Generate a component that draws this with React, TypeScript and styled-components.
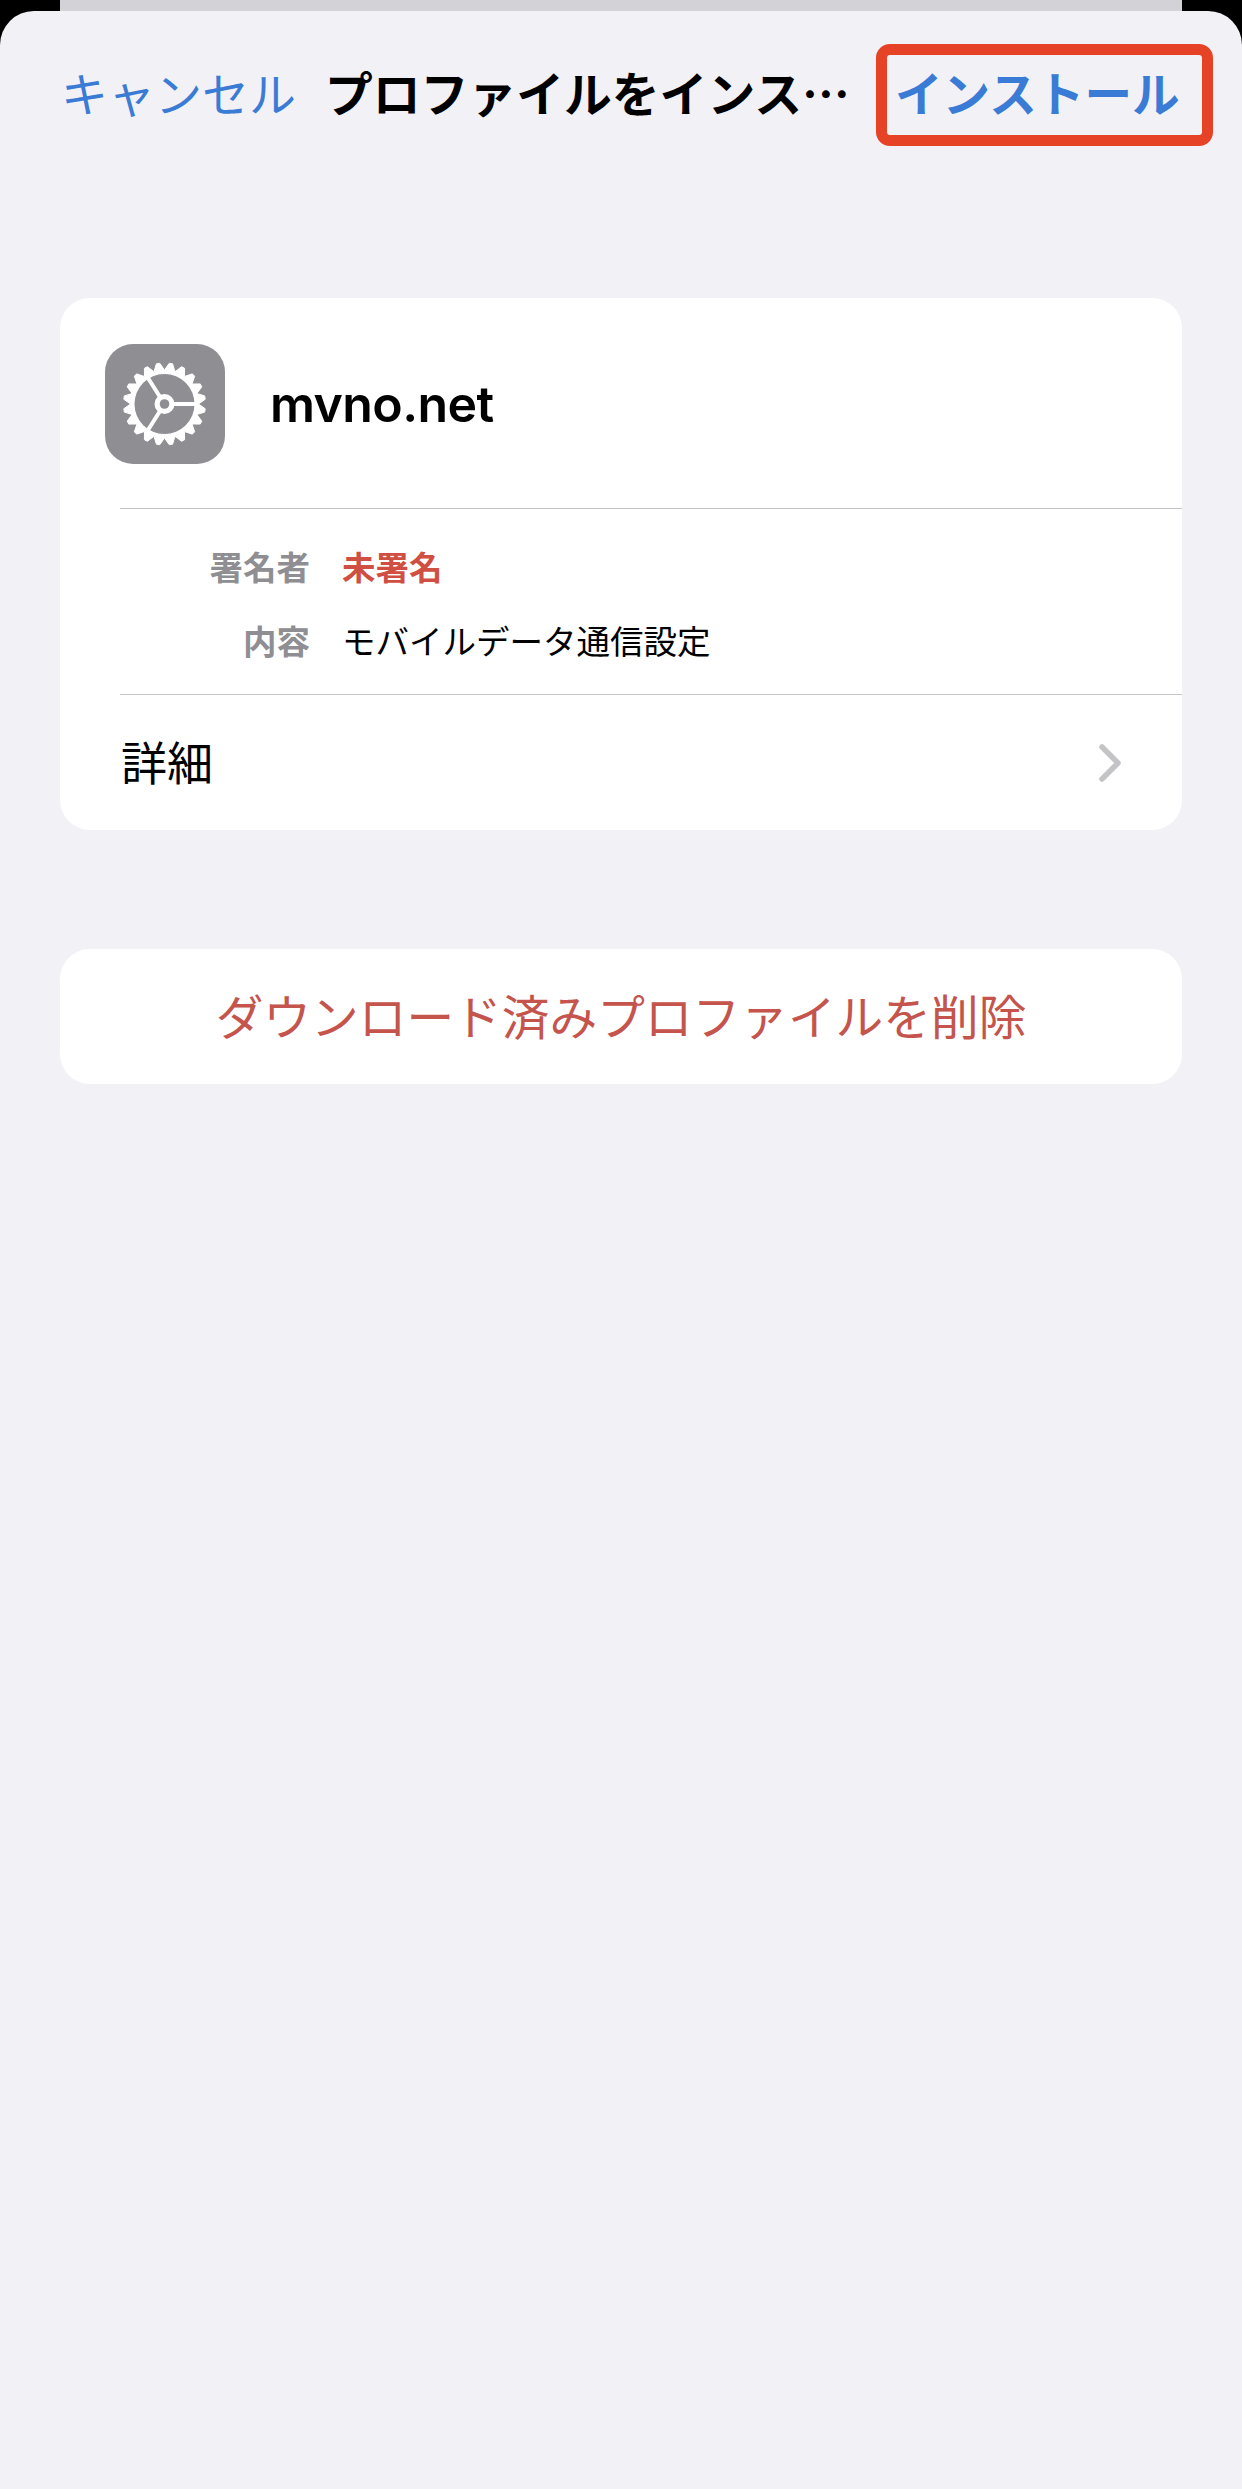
import React from "react";
import styled, { createGlobalStyle } from "styled-components";

const Global = createGlobalStyle`
  html, body { margin: 0; padding: 0; background: #000; }
  body { font-family: Inter, "Noto Sans CJK JP", sans-serif; }
`;

const CJK = `"Noto Sans CJK JP", "Noto Sans CJK SC", sans-serif`;

const Page = styled.div`
  width: 1242px;
  height: 2489px;
  overflow: hidden;
  background: #000;
  display: flex;
  flex-direction: column;
`;

const BackSheet = styled.div`
  height: 11px;
  margin: 0 60px;
  flex: none;
  background: #d2d2d7;
`;

const Sheet = styled.main`
  flex: 1;
  background: #f1f1f6;
  border-radius: 34px 34px 0 0;
  display: flex;
  flex-direction: column;
`;

const NavBar = styled.header`
  height: 136px;
  margin-top: 33px;
  padding: 0 29px 0 61px;
  display: flex;
  align-items: flex-start;
  font-family: ${CJK};
  font-size: 47px;
  line-height: 96px;
  white-space: nowrap;
`;

const NavAction = styled.span<{ $bold?: boolean }>`
  color: #3a7bd5;
  font-weight: ${(p) => (p.$bold ? 700 : 400)};
  font-size: ${(p) => (p.$bold ? "47.6px" : "47px")};
`;

const NavTitle = styled.h1`
  margin: 0 0 0 29px;
  flex: 1;
  font-size: 47.8px;
  line-height: 96px;
  font-weight: 700;
  color: #000;
`;

const Highlight = styled.div`
  width: 337px;
  height: 102px;
  box-sizing: border-box;
  border: 11px solid #e64326;
  border-radius: 14px;
  padding-left: 8px;
  line-height: 74px;
`;

const Card = styled.section<{ $gap: number }>`
  margin: ${(p) => p.$gap}px 60px 0;
  background: #fff;
  border-radius: 30px;
  overflow: hidden;
`;

const ProfileRow = styled.div`
  height: 210px;
  box-sizing: border-box;
  padding: 1px 0 0 45px;
  display: flex;
  align-items: center;
  gap: 45px;
`;

const IconTile = styled.div`
  width: 120px;
  height: 120px;
  flex: none;
  border-radius: 28px;
  background: #8e8e93;
  display: flex;
  align-items: center;
  justify-content: center;
`;

const ProfileName = styled.div`
  font-family: Inter, sans-serif;
  font-size: 50px;
  font-weight: 600;
  letter-spacing: -0.6px;
  color: #000;
`;

const Divider = styled.hr`
  margin: 0 0 0 60px;
  border: 0;
  height: 1px;
  background: #c6c6c9;
`;

const InfoBlock = styled.div`
  padding: 20px 0 17px;
  display: grid;
  grid-template-columns: 250px 1fr;
  column-gap: 33px;
  font-family: ${CJK};
  font-size: 33.5px;
  line-height: 74px;
`;

const InfoLabel = styled.div`
  text-align: right;
  color: #8e8e93;
  font-weight: 700;
`;

const InfoValue = styled.div<{ $alert?: boolean }>`
  color: ${(p) => (p.$alert ? "#cf4f43" : "#000")};
  font-weight: ${(p) => (p.$alert ? 700 : 400)};
  margin-left: -1px;
`;

const DetailRow = styled.div`
  height: 135px;
  padding: 0 60px 0 61px;
  display: flex;
  align-items: center;
  justify-content: space-between;
  font-family: ${CJK};
  font-size: 46px;
  color: #000;
`;

const DetailLabel = styled.span`
  margin-top: -5px;
`;

const DeleteRow = styled.div`
  height: 135px;
  padding-bottom: 4px;
  box-sizing: border-box;
  display: flex;
  align-items: center;
  justify-content: center;
  font-family: ${CJK};
  font-size: 47.7px;
  color: #c4544c;
`;

function gearPath(cx: number, cy: number, teeth: number, rOuter: number, rRoot: number) {
  const pts: string[] = [];
  const step = (Math.PI * 2) / teeth;
  for (let i = 0; i < teeth; i++) {
    const a = i * step + step / 2;
    const offsets: [number, number][] = [
      [-0.5, rRoot],
      [-0.13, rOuter],
      [0.13, rOuter],
      [0.5, rRoot],
    ];
    for (const [o, r] of offsets) {
      const t = a + o * step;
      pts.push(`${(cx + r * Math.cos(t)).toFixed(2)} ${(cy + r * Math.sin(t)).toFixed(2)}`);
    }
  }
  return `M${pts.join("L")}Z`;
}

const GearIcon = () => (
  <svg width="120" height="120" viewBox="0 0 120 120">
    <path d={gearPath(59.5, 60, 20, 41, 34)} fill="#fff" stroke="#fff" strokeWidth="1" strokeLinejoin="round" />
    <circle cx="59.5" cy="60" r="30" fill="#8e8e93" />
    <g stroke="#fff" strokeWidth="4" fill="none">
      <line x1="59.5" y1="60" x2="90" y2="60" />
      <line x1="59.5" y1="60" x2="43" y2="34" />
      <line x1="59.5" y1="60" x2="43" y2="86" />
    </g>
    <circle cx="59.5" cy="60" r="10" fill="#fff" />
    <circle cx="59.5" cy="60" r="4.8" fill="#8e8e93" />
  </svg>
);

const Chevron = () => (
  <svg width="24" height="38" viewBox="0 0 24 38">
    <path d="M4 3l16 16L4 35" fill="none" stroke="#c4c4c6" strokeWidth="5.5" strokeLinecap="round" strokeLinejoin="round" />
  </svg>
);

export default function App() {
  return (
    <Page lang="ja">
      <Global />
      <BackSheet />
      <Sheet>
        <NavBar>
          <NavAction>キャンセル</NavAction>
          <NavTitle>プロファイルをインス…</NavTitle>
          <Highlight>
            <NavAction $bold>インストール</NavAction>
          </Highlight>
        </NavBar>
        <Card $gap={118}>
          <ProfileRow>
            <IconTile>
              <GearIcon />
            </IconTile>
            <ProfileName>mvno.net</ProfileName>
          </ProfileRow>
          <Divider />
          <InfoBlock>
            <InfoLabel>署名者</InfoLabel>
            <InfoValue $alert>未署名</InfoValue>
            <InfoLabel>内容</InfoLabel>
            <InfoValue>モバイルデータ通信設定</InfoValue>
          </InfoBlock>
          <Divider />
          <DetailRow>
            <DetailLabel>詳細</DetailLabel>
            <Chevron />
          </DetailRow>
        </Card>
        <Card $gap={119}>
          <DeleteRow>ダウンロード済みプロファイルを削除</DeleteRow>
        </Card>
      </Sheet>
    </Page>
  );
}
